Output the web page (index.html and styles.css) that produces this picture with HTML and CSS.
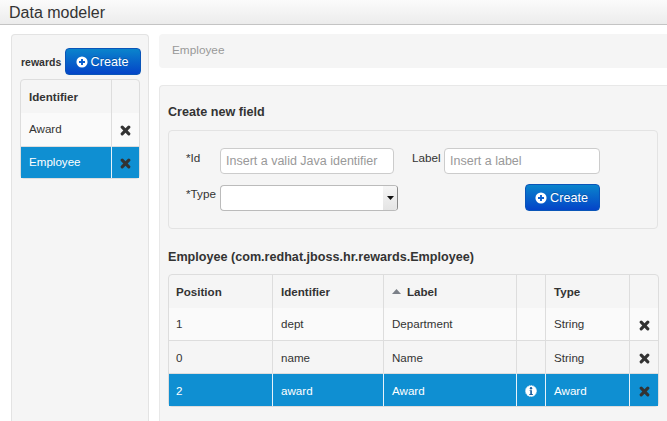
FILE: index.html
```html
<!DOCTYPE html>
<html lang="en">
<head>
<meta charset="utf-8">
<title>Data modeler</title>
<link rel="stylesheet" href="styles.css">
</head>
<body>
<svg class="defs" width="0" height="0" aria-hidden="true">
  <defs>
    <symbol id="plus" viewBox="0 0 14 14"><circle cx="7" cy="7" r="6.500" fill="#fff"/><path d="M3.500 7h7M7 3.500v7" stroke="#0a5fd0" stroke-width="2.200"/></symbol>
    <symbol id="cross" viewBox="0 0 12 12"><path d="M2.400 2.400l7.200 7.200M9.600 2.400l-7.200 7.200" stroke="#333" stroke-width="3.400" stroke-linecap="round"/></symbol>
  </defs>
</svg>
<header class="topbar">Data modeler</header>
<div class="layout">
  <aside class="sidebar">
    <div class="side-head">
      <span class="pkg">rewards</span>
      <button class="btn btn-side" type="button"><svg class="plus"><use href="#plus"/></svg>Create</button>
    </div>
    <table class="grid side-grid">
      <colgroup><col class="c-side-id"><col class="c-side-x"></colgroup>
      <thead><tr><th>Identifier</th><th></th></tr></thead>
      <tbody>
        <tr class="first"><td>Award</td><td class="act"><svg class="cross"><use href="#cross"/></svg></td></tr>
        <tr class="sel"><td>Employee</td><td class="act"><svg class="cross"><use href="#cross"/></svg></td></tr>
      </tbody>
    </table>
  </aside>
  <main class="content">
    <div class="crumb">Employee</div>
    <section class="panel">
      <h2 class="title">Create new field</h2>
      <form class="fieldbox">
        <div class="row">
          <label class="lbl lbl-id">*Id</label>
          <input class="inp inp-id" type="text" placeholder="Insert a valid Java identifier">
          <label class="lbl lbl-label">Label</label>
          <input class="inp inp-label" type="text" placeholder="Insert a label">
        </div>
        <div class="row row-2">
          <label class="lbl lbl-type">*Type</label>
          <div class="select"><span class="select-arrow"><svg width="7" height="4" viewBox="0 0 7 4"><path d="M0 0h7L3.500 4z" fill="#111"/></svg></span></div>
          <button class="btn btn-form" type="button"><svg class="plus"><use href="#plus"/></svg>Create</button>
        </div>
      </form>
      <h2 class="title title-table">Employee (com.redhat.jboss.hr.rewards.Employee)</h2>
      <table class="grid main-grid">
        <colgroup><col class="c1"><col class="c2"><col class="c3"><col class="c4"><col class="c5"><col class="c6"></colgroup>
        <thead><tr><th>Position</th><th>Identifier</th><th><svg class="sort" width="9" height="5" viewBox="0 0 9 5"><path d="M4.500 0L9 5H0z" fill="#7b8088"/></svg>Label</th><th></th><th>Type</th><th></th></tr></thead>
        <tbody>
          <tr class="first"><td>1</td><td>dept</td><td>Department</td><td></td><td>String</td><td class="act"><svg class="cross"><use href="#cross"/></svg></td></tr>
          <tr><td>0</td><td>name</td><td>Name</td><td></td><td>String</td><td class="act"><svg class="cross"><use href="#cross"/></svg></td></tr>
          <tr class="sel"><td>2</td><td>award</td><td>Award</td><td class="info-cell"><svg class="info" width="12" height="12" viewBox="0 0 13 13"><circle cx="6.500" cy="6.500" r="6" fill="#fff" stroke="#cfe6f5" stroke-dasharray="1.500 1"/><circle cx="6.500" cy="3.500" r="1.300" fill="#1a5f9e"/><path d="M5 5.600h2.500v4.100h1v1H4.700v-1h1V6.600H5z" fill="#1a5f9e"/></svg></td><td>Award</td><td class="act"><svg class="cross"><use href="#cross"/></svg></td></tr>
        </tbody>
      </table>
    </section>
  </main>
</div>
</body>
</html>
```

FILE: styles.css
```css
* { box-sizing: border-box; }

html, body {
  margin: 0;
  height: 421px;
  overflow: hidden;
  background: #fff;
}

body {
  font-family: "Liberation Sans", Arial, sans-serif;
  font-size: 12px;
  color: #333;
}

.defs { position: absolute; }

.topbar {
  height: 25px;
  padding-left: 9px;
  font-size: 16px;
  line-height: 25px;
  color: #333;
  background: linear-gradient(#fbfbfb, #ececec);
  border-bottom: 1px solid #c4c4c4;
}

.layout {
  display: flex;
  gap: 10px;
  padding: 9px 0 0 11px;
  height: 396px;
}

.sidebar {
  flex: none;
  width: 138px;
  padding: 13px 8px 0;
  background: #f5f5f5;
  border: 1px solid #e3e3e3;
  border-bottom: 0;
  border-radius: 4px 4px 0 0;
}

.side-head {
  display: flex;
  align-items: center;
  justify-content: space-between;
  height: 27px;
  margin-bottom: 4px;
  margin-right: -1px;
}

.pkg {
  font-size: 10.500px;
  font-weight: bold;
  margin: 1px 0 0 1px;
  color: #333;
}

.btn {
  display: flex;
  align-items: center;
  justify-content: center;
  gap: 3px;
  height: 27px;
  padding: 0 2px 0 0;
  font-family: inherit;
  font-size: 12.600px;
  color: #fff;
  background: linear-gradient(#0a84cc, #0444c8);
  border: 1px solid #0a55b8;
  border-radius: 4px;
  text-shadow: 0 -1px 0 rgba(0, 0, 0, .2);
}

.btn-side { width: 76px; }

.btn-form {
  width: 75px;
  margin-left: 127px;
  margin-top: -1px;
}

.plus { width: 12px; height: 12px; }

.cross { display: block; width: 11px; height: 11px; margin: 2px auto 0; }

.grid {
  border-collapse: separate;
  border-spacing: 0;
  table-layout: fixed;
  border: 1px solid #ddd;
  border-radius: 4px;
  background: #f5f5f5;
}

.grid th, .grid td {
  padding: 0 0 0 8px;
  text-align: left;
  height: 33px;
  border-left: 1px solid #ddd;
  border-top: 1px solid #ddd;
  font-size: 11.600px;
}

.grid th:first-child, .grid td:first-child {
  border-left: 0;
  padding-left: 7px;
}

.grid th {
  border-top: 0;
  font-weight: bold;
  color: #333;
}

.grid td.act { padding: 0; }

.grid tr.first td { background: #fafafa; border-top: 0; padding-bottom: 2px; }

.grid tr.first td.act { padding-bottom: 0; }

.grid .sel td {
  background: #0f8fd2;
  color: #fff;
  border-left-color: #e6f2fa;
}

.side-grid { width: 120px; }
.side-grid th:first-child, .side-grid td:first-child { padding-left: 8px; }
.side-grid .sel td:first-child { padding-bottom: 2px; }
.c-side-id { width: 90px; }
.c-side-x { width: 28px; }

.side-grid .sel td { height: 32px; }

.content {
  flex: 1;
  min-width: 0;
}

.crumb {
  height: 34px;
  padding-left: 13px;
  line-height: 33px;
  font-size: 11.800px;
  color: #999;
  background: #f5f5f5;
  border-radius: 4px 0 0 4px;
}

.panel {
  margin-top: 17px;
  height: 336px;
  padding: 18px 8px 0 9px;
  background: #f5f5f5;
  border: 1px solid #e8e8e8;
  border-width: 1px 0 0 1px;
  border-radius: 4px 0 0 0;
}

.title {
  margin: 0 0 0 -1px;
  font-size: 12.600px;
  line-height: 17px;
  font-weight: bold;
  color: #333;
}

.fieldbox {
  width: 490px;
  height: 99px;
  margin: 9px 0 0 -1px;
  padding: 17px 0 0 17px;
  border: 1px solid #e3e3e3;
  border-radius: 4px;
}

.row { display: flex; align-items: flex-start; }

.row-2 { margin-top: 11px; }

.lbl { font-size: 11.700px; line-height: 15px; color: #333; }

.lbl-id { width: 34px; margin-top: 2px; }
.lbl-label { margin: 2px 0 0 18px; width: 32px; }
.lbl-type { width: 34px; margin-top: 1px; }

.inp {
  height: 26px;
  padding: 0 5px;
  font-family: inherit;
  font-size: 12.500px;
  color: #333;
  background: #fff;
  border: 1px solid #ccc;
  border-radius: 4px;
}

.inp::placeholder { color: #999; opacity: 1; }

.inp-id { width: 174px; }
.inp-label { width: 156px; }

.select {
  display: flex;
  justify-content: flex-end;
  width: 178px;
  height: 26px;
  background: #fff;
  border: 1px solid #bbb;
  border-right-color: #888;
  border-radius: 4px;
  overflow: hidden;
}

.select-arrow {
  display: flex;
  align-items: center;
  justify-content: center;
  width: 14px;
  background: linear-gradient(#f6f6f6, #e4e4e4);
}

.title-table { margin-top: 20px; margin-bottom: 8px; }

.main-grid { width: 491px; margin-left: -1px; }

.c1 { width: 103px; }
.c2 { width: 111px; }
.c3 { width: 133px; }
.c4 { width: 29px; }
.c5 { width: 84px; }
.c6 { width: 29px; }

.main-grid .first td { height: 32px; }

.sort { margin-right: 6px; vertical-align: 2px; }

.grid td.info-cell { padding: 0 1px 0 0; text-align: center; }

.info { display: block; margin: 2px auto 0; }
```
